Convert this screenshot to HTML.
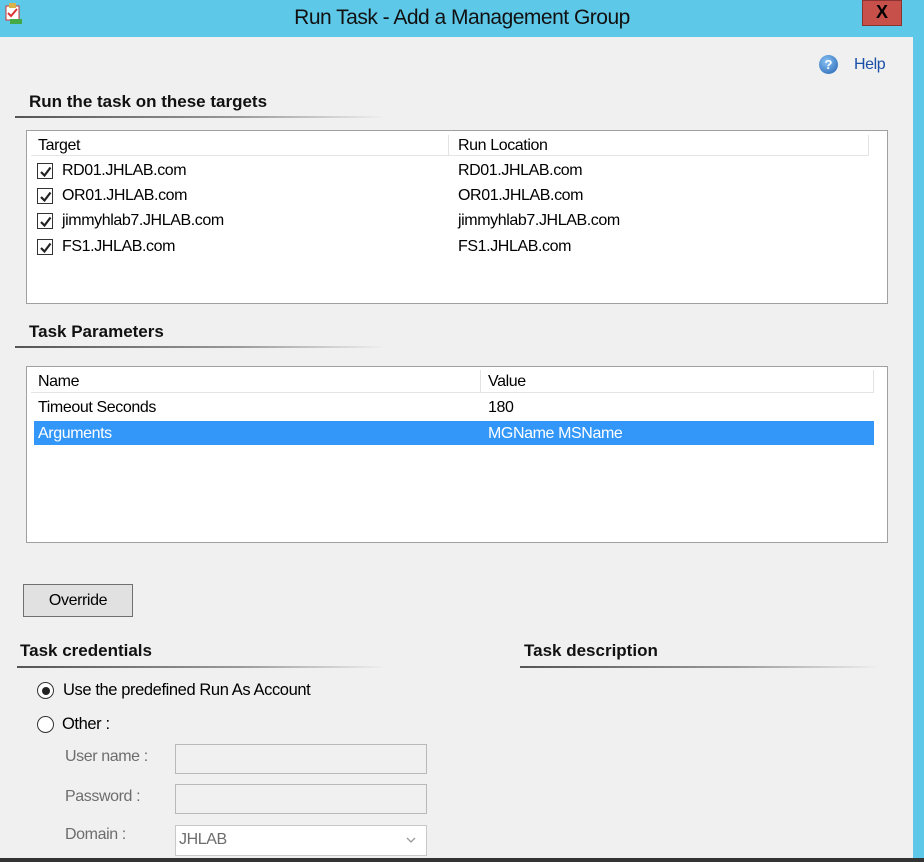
<!DOCTYPE html>
<html><head><style>
*{margin:0;padding:0;box-sizing:border-box}
body{width:924px;height:862px;overflow:hidden;background:#5ec8e9;font-family:"Liberation Sans",sans-serif;position:relative}
.a{position:absolute}
.body{left:0;top:37px;width:913px;height:821px;background:#f0f0f0}
.t{font-size:16px;color:#000;white-space:nowrap;letter-spacing:-0.4px}
.h{font-weight:bold;font-size:17px;color:#111;white-space:nowrap}
.ul{height:2px;background:linear-gradient(90deg,#555,#999 60%,rgba(200,200,200,0))}
.box{background:#fff;border:1px solid #a0a0a0}
.cb{width:16px;height:16px;border:1px solid #333;background:#fff}
.cb svg{position:absolute;left:1px;top:1px}
.inp{border:1px solid #b8b8b8;background:#f0f0f0}
.g{color:#6d6d6d}
</style></head><body>
<div class="a" style="left:4px;top:2px;width:18px;height:22px">
<svg width="20" height="24"><rect x="2" y="4" width="13" height="14" fill="#fff" stroke="#c33"/><rect x="5" y="1" width="7" height="5" fill="#d9b24c"/><path d="M4 11l3 3 6-7" stroke="#d33" stroke-width="2" fill="none"/><rect x="6" y="17" width="12" height="5" fill="#4a4"/></svg></div>
<div class="a t" style="left:0;width:924px;top:6px;text-align:center;font-size:21px;color:#111;letter-spacing:-0.5px">Run Task - Add a Management Group</div>
<div class="a" style="left:862px;top:0;width:40px;height:26px;background:#c7504a;border:1px solid #8a3330;color:#000;font-weight:bold;font-size:18px;text-align:center;line-height:22px">X</div>
<div class="a body"></div>
<div class="a" style="left:0;top:858px;width:924px;height:4px;background:#333"></div>

<div class="a" style="left:819px;top:55px;width:19px;height:19px;border-radius:50%;background:radial-gradient(circle at 40% 35%,#8cc4f5,#1f5fb0);color:#fff;font-weight:bold;font-size:13px;text-align:center;line-height:19px">?</div>
<div class="a t" style="left:854px;top:56px;color:#1a4fa8;font-size:16px">Help</div>

<div class="a h" style="left:29px;top:92px">Run the task on these targets</div>
<div class="a ul" style="left:15px;top:116px;width:370px"></div>

<div class="a box" style="left:26px;top:130px;width:862px;height:174px"></div>
<div class="a" style="left:31px;top:135px;width:838px;height:21px;border-bottom:1px solid #e5e5e5;background:#fff"></div>
<div class="a" style="left:448px;top:135px;width:1px;height:21px;background:#e3e3e3"></div>
<div class="a" style="left:868px;top:135px;width:1px;height:21px;background:#e3e3e3"></div>
<div class="a t" style="left:38px;top:137px">Target</div>
<div class="a t" style="left:458px;top:137px">Run Location</div>

<div class="a cb" style="left:37px;top:163px"><svg width="14" height="14"><path d="M2 7l3.5 3.5 6-8" stroke="#222" stroke-width="2.2" fill="none"/></svg></div>
<div class="a t" style="left:62px;top:162px">RD01.JHLAB.com</div><div class="a t" style="left:458px;top:162px">RD01.JHLAB.com</div>
<div class="a cb" style="left:37px;top:188px"><svg width="14" height="14"><path d="M2 7l3.5 3.5 6-8" stroke="#222" stroke-width="2.2" fill="none"/></svg></div>
<div class="a t" style="left:62px;top:187px">OR01.JHLAB.com</div><div class="a t" style="left:458px;top:187px">OR01.JHLAB.com</div>
<div class="a cb" style="left:37px;top:213px"><svg width="14" height="14"><path d="M2 7l3.5 3.5 6-8" stroke="#222" stroke-width="2.2" fill="none"/></svg></div>
<div class="a t" style="left:62px;top:212px">jimmyhlab7.JHLAB.com</div><div class="a t" style="left:458px;top:212px">jimmyhlab7.JHLAB.com</div>
<div class="a cb" style="left:37px;top:239px"><svg width="14" height="14"><path d="M2 7l3.5 3.5 6-8" stroke="#222" stroke-width="2.2" fill="none"/></svg></div>
<div class="a t" style="left:62px;top:238px">FS1.JHLAB.com</div><div class="a t" style="left:458px;top:238px">FS1.JHLAB.com</div>

<div class="a h" style="left:29px;top:322px">Task Parameters</div>
<div class="a ul" style="left:15px;top:346px;width:370px"></div>

<div class="a box" style="left:26px;top:366px;width:862px;height:177px"></div>
<div class="a" style="left:31px;top:370px;width:842px;height:23px;border-bottom:1px solid #e5e5e5;background:#fff"></div>
<div class="a" style="left:480px;top:370px;width:1px;height:23px;background:#e3e3e3"></div>
<div class="a" style="left:873px;top:370px;width:1px;height:23px;background:#e3e3e3"></div>
<div class="a t" style="left:38px;top:373px">Name</div>
<div class="a t" style="left:488px;top:373px">Value</div>
<div class="a t" style="left:38px;top:399px">Timeout Seconds</div>
<div class="a t" style="left:488px;top:399px">180</div>
<div class="a" style="left:34px;top:421px;width:840px;height:24px;background:#3397fa"></div>
<div class="a t" style="left:38px;top:425px;color:#fff">Arguments</div>
<div class="a t" style="left:488px;top:425px;color:#fff">MGName MSName</div>

<div class="a" style="left:23px;top:584px;width:110px;height:33px;background:#e1e1e1;border:1px solid #707070"></div>
<div class="a t" style="left:23px;width:110px;text-align:center;top:592px">Override</div>

<div class="a h" style="left:20px;top:641px">Task credentials</div>
<div class="a ul" style="left:17px;top:666px;width:370px"></div>
<div class="a h" style="left:524px;top:641px">Task description</div>
<div class="a ul" style="left:520px;top:666px;width:360px"></div>

<div class="a" style="left:37px;top:682px;width:17px;height:17px;border-radius:50%;border:1px solid #333;background:#fff"><div class="a" style="left:3.5px;top:3.5px;width:8px;height:8px;border-radius:50%;background:#222"></div></div>
<div class="a t" style="left:63px;top:681px;font-size:16.5px">Use the predefined Run As Account</div>
<div class="a" style="left:37px;top:716px;width:17px;height:17px;border-radius:50%;border:1px solid #333;background:#fff"></div>
<div class="a t" style="left:62px;top:715px;font-size:16.5px">Other :</div>

<div class="a t g" style="left:65px;top:748px">User name :</div>
<div class="a inp" style="left:175px;top:744px;width:252px;height:30px"></div>
<div class="a t g" style="left:65px;top:788px">Password :</div>
<div class="a inp" style="left:175px;top:784px;width:252px;height:30px"></div>
<div class="a t g" style="left:65px;top:826px">Domain :</div>
<div class="a" style="left:175px;top:825px;width:252px;height:31px;border:1px solid #c8c8c8;background:#fff"></div>
<div class="a t g" style="left:179px;top:831px">JHLAB</div>
<div class="a" style="left:404px;top:833px"><svg width="14" height="14"><path d="M3 5l4 4 4-4" stroke="#999" stroke-width="1.3" fill="none"/></svg></div>
</body></html>
